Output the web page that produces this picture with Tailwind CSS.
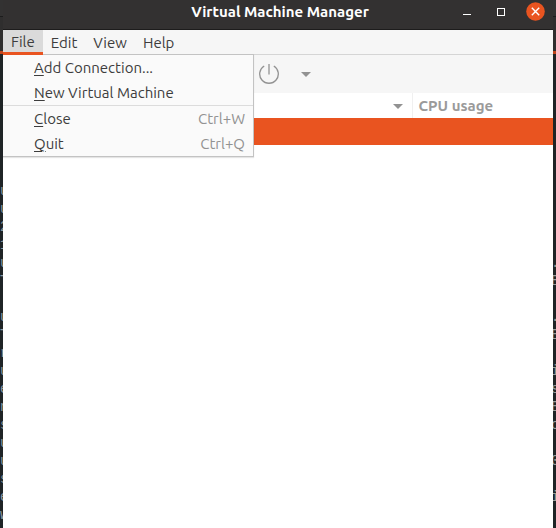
<!DOCTYPE html>
<html lang="en">
<head>
<meta charset="utf-8">
<title>Virtual Machine Manager</title>
<script src="https://cdn.jsdelivr.net/npm/@tailwindcss/browser@4"></script>
</head>
<body class="flex h-screen overflow-hidden bg-[#1f2426] font-['Ubuntu','Noto_Sans',sans-serif] text-[15px] text-[#3d3d3d]">
  <!-- Terminal behind the window, left edge -->
  <div aria-hidden="true" class="flex w-[3px] shrink-0 flex-col overflow-hidden bg-[#1f2426]">
    <div class="h-4 shrink-0 bg-[#333232]"></div>
    <div class="h-px shrink-0 bg-[#1c1c1c]"></div>
    <div class="h-[34px] shrink-0 bg-[#2f2e2e]"></div>
    <div class="h-[3px] shrink-0 bg-[#c0451c]"></div>
    <pre class="pt-32 font-['Liberation_Mono',monospace] text-sm leading-[18px] text-[#8997a0]">u
u
2
1
u
T

u
T
r
u
e
n
s
u
u
s
e
w</pre>
  </div>

  <main class="flex min-w-0 flex-1 flex-col bg-white">
    <header class="flex h-[30px] shrink-0 items-center border-b border-[#1d1c1c] bg-[#333131] pl-3 pr-2 text-white">
      <div class="flex-1"></div>
      <h1 class="pb-1.5 font-bold leading-5">Virtual Machine Manager</h1>
      <div class="flex flex-1 items-center justify-end gap-4 pb-1.5">
        <button aria-label="Minimize" class="size-[18px]"><svg viewBox="0 0 18 18" class="size-[18px]" shape-rendering="crispEdges"><path d="M5 11.5h8" stroke="#fff"/></svg></button>
        <button aria-label="Maximize" class="size-[18px]"><svg viewBox="0 0 18 18" class="size-[18px]" shape-rendering="crispEdges"><path d="M5.500 5.500h7v7h-7z" fill="none" stroke="#fff"/></svg></button>
        <button aria-label="Close window" class="size-[19px]"><svg viewBox="0 0 19 19" class="size-[19px]"><circle cx="9.500" cy="9.500" r="9.300" fill="#e95420"/><path d="M5.800 5.800l7.400 7.400M13.200 5.800l-7.400 7.400" stroke="#fff" stroke-width="1.400"/></svg></button>
      </div>
    </header>

    <nav class="relative flex h-[25px] shrink-0 border-b border-[#d5d5d5] bg-[#f6f6f6]">
      <button class="relative z-20 -mb-px border-b-3 border-[#e95420] bg-[#dadada] px-2 pt-0.5 leading-5">File</button>
      <button class="px-2 pt-px leading-5">Edit</button>
      <button class="px-2 pt-px leading-5">View</button>
      <button class="px-2 pt-px leading-5">Help</button>
      <div role="menu" class="absolute left-0 top-6 z-10 flex w-[251px] flex-col border border-l-0 border-[#c3c3c3] bg-[#fafafa] shadow-[0_1px_1px_#0000001a]">
        <button role="menuitem" class="flex h-[25px] items-center pl-[31px] pt-0.5"><span class="underline underline-offset-2">A</span>dd Connection...</button>
        <button role="menuitem" class="flex h-[25px] items-center pl-[31px] pt-0.5"><span class="underline underline-offset-2">N</span>ew Virtual Machine</button>
        <div role="separator" class="h-px bg-[#dcdcdc]"></div>
        <button role="menuitem" class="flex h-[25px] items-center pl-[31px] pr-2 pt-0.5"><span class="underline underline-offset-2">C</span>lose<kbd class="ml-auto font-['Ubuntu','Noto_Sans',sans-serif] text-[15px] text-[#929292]">Ctrl+W</kbd></button>
        <button role="menuitem" class="flex h-[25px] items-center pl-[31px] pr-2 pt-0.5"><span class="underline underline-offset-2">Q</span>uit<kbd class="ml-auto font-['Ubuntu','Noto_Sans',sans-serif] text-[15px] text-[#929292]">Ctrl+Q</kbd></button>
      </div>
    </nav>

    <div role="toolbar" class="flex h-[38px] shrink-0 items-center gap-5 bg-[#f6f6f6] pl-64">
      <button disabled aria-label="Shut down" class="size-5"><svg viewBox="0 0 20 20" class="size-5" fill="none" stroke="#929292" stroke-width="1.300"><path d="M5.200 2A9.300 9.300 0 1 0 14.800 2"/><path d="M10 0v10.500"/></svg></button>
      <button disabled aria-label="Shutdown options" class="h-5 w-4"><svg viewBox="0 0 16 20" class="h-5 w-4"><path d="M2 8h10L7 13z" fill="#929292"/></svg></button>
    </div>

    <table class="w-full shrink-0 table-fixed border-collapse">
      <thead>
        <tr class="h-[25px]">
          <th class="w-[409px] border-r border-[#f0f0f0] p-0"><button aria-label="Sort by name" class="flex w-full justify-end pr-2"><svg viewBox="0 0 12 12" class="size-3"><path d="M1 4h10L6 9z" fill="#929292"/></svg></button></th>
          <th class="p-0 pl-[6px] text-left font-bold leading-5 text-[#9a9a9a]">CPU usage</th>
        </tr>
      </thead>
      <tbody>
        <tr aria-selected="true" class="h-[27px] bg-[#e95420]"><td class="p-0"></td><td class="p-0"></td></tr>
      </tbody>
    </table>
  </main>

  <!-- Terminal behind the window, right edge -->
  <div aria-hidden="true" class="flex w-[3px] shrink-0 flex-col overflow-hidden bg-[#1f2426]">
    <div class="h-4 shrink-0 bg-[#333232]"></div>
    <div class="h-px shrink-0 bg-[#1c1c1c]"></div>
    <div class="h-[34px] shrink-0 bg-[#2f2e2e]"></div>
    <div class="h-[3px] shrink-0 bg-[#c0451c]"></div>
    <pre class="-ml-0.5 pt-50 font-['Liberation_Mono',monospace] text-sm leading-[18px] text-[#9a9d9a]">.
E

.
E

i
s
E
o

0

i</pre>
  </div>
</body>
</html>
